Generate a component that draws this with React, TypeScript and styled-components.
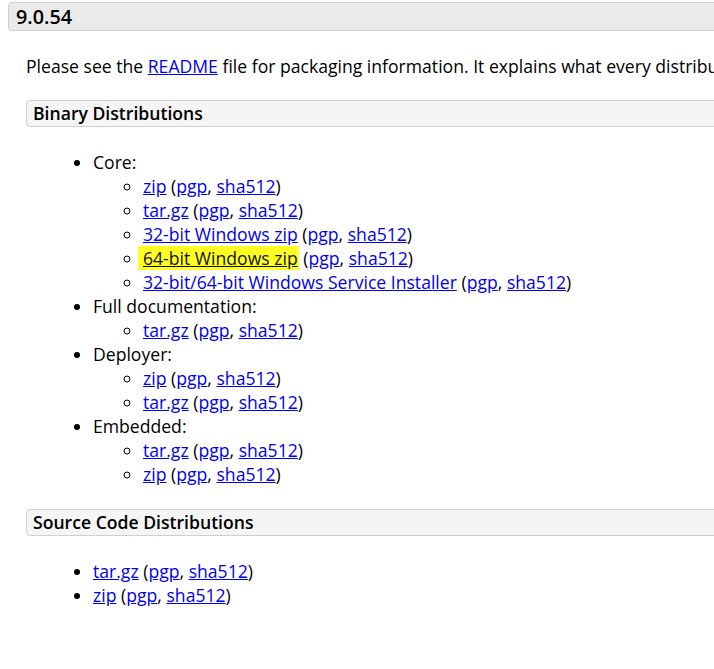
import React from "react";
import styled, { createGlobalStyle } from "styled-components";

const Global = createGlobalStyle`
  html, body { margin: 0; padding: 0; background: #fff; overflow: hidden; }
  body { font-family: "Open Sans", "Noto Sans", sans-serif; color: #000; }
`;

const Page = styled.div`
  width: 760px;
  padding: 2px 0 0 8px;
  font-size: 17.6px;
  line-height: 24px;
`;

const VersionHeader = styled.h3`
  margin: 0;
  padding: 0 7px;
  height: 27px;
  line-height: 27px;
  font-size: 19.8px;
  font-weight: 600;
  background: #eaeaea;
  border: 1px solid #cfcfcf;
  border-radius: 4px;
`;

const Content = styled.div`
  margin-left: 18px;
`;

const Paragraph = styled.p`
  margin: 23px 0 22px;
  white-space: nowrap;
`;

const SectionHeader = styled.h4`
  margin: 0;
  padding: 0 6px;
  height: 25px;
  line-height: 25px;
  font-size: 17.6px;
  font-weight: 600;
  background: #f5f5f5;
  border: 1px solid #cfcfcf;
  border-radius: 4px;
`;

const List = styled.ul<{ $nested?: boolean }>`
  margin: ${(p) => (p.$nested ? "0" : "23px 0 23px")};
  padding-left: ${(p) => (p.$nested ? "50px" : "67px")};
  list-style-type: ${(p) => (p.$nested ? "circle" : "disc")};
`;

const Item = styled.li``;

const Link = styled.a`
  color: #0000ee;
  text-decoration: underline;
`;

const Highlight = styled.span`
  background: #ffff22;
  padding: 0 1px 0 5px;
  margin-left: -5px;
  display: inline-block;
  line-height: 24px;
  color: #111;
  a { color: #111; }
`;

type Row = { name: string; highlight?: boolean };

const Download: React.FC<Row> = ({ name, highlight }) => (
  <Item>
    {highlight ? (
      <Highlight>
        <Link href="#">{name}</Link>
      </Highlight>
    ) : (
      <Link href="#">{name}</Link>
    )}{" "}
    (<Link href="#">pgp</Link>, <Link href="#">sha512</Link>)
  </Item>
);

const groups: { label: string; items: Row[] }[] = [
  {
    label: "Core:",
    items: [
      { name: "zip" },
      { name: "tar.gz" },
      { name: "32-bit Windows zip" },
      { name: "64-bit Windows zip", highlight: true },
      { name: "32-bit/64-bit Windows Service Installer" },
    ],
  },
  { label: "Full documentation:", items: [{ name: "tar.gz" }] },
  { label: "Deployer:", items: [{ name: "zip" }, { name: "tar.gz" }] },
  { label: "Embedded:", items: [{ name: "tar.gz" }, { name: "zip" }] },
];

export default function App() {
  return (
    <>
      <Global />
      <Page>
        <VersionHeader>9.0.54</VersionHeader>
        <Content>
          <Paragraph>
            Please see the <Link href="#">README</Link> file for packaging
            information. It explains what every distribution contains.
          </Paragraph>
          <SectionHeader>Binary Distributions</SectionHeader>
          <List>
            {groups.map((g) => (
              <Item key={g.label}>
                {g.label}
                <List $nested>
                  {g.items.map((it, i) => (
                    <Download key={i} {...it} />
                  ))}
                </List>
              </Item>
            ))}
          </List>
          <SectionHeader>Source Code Distributions</SectionHeader>
          <List>
            <Download name="tar.gz" />
            <Download name="zip" />
          </List>
        </Content>
      </Page>
    </>
  );
}
